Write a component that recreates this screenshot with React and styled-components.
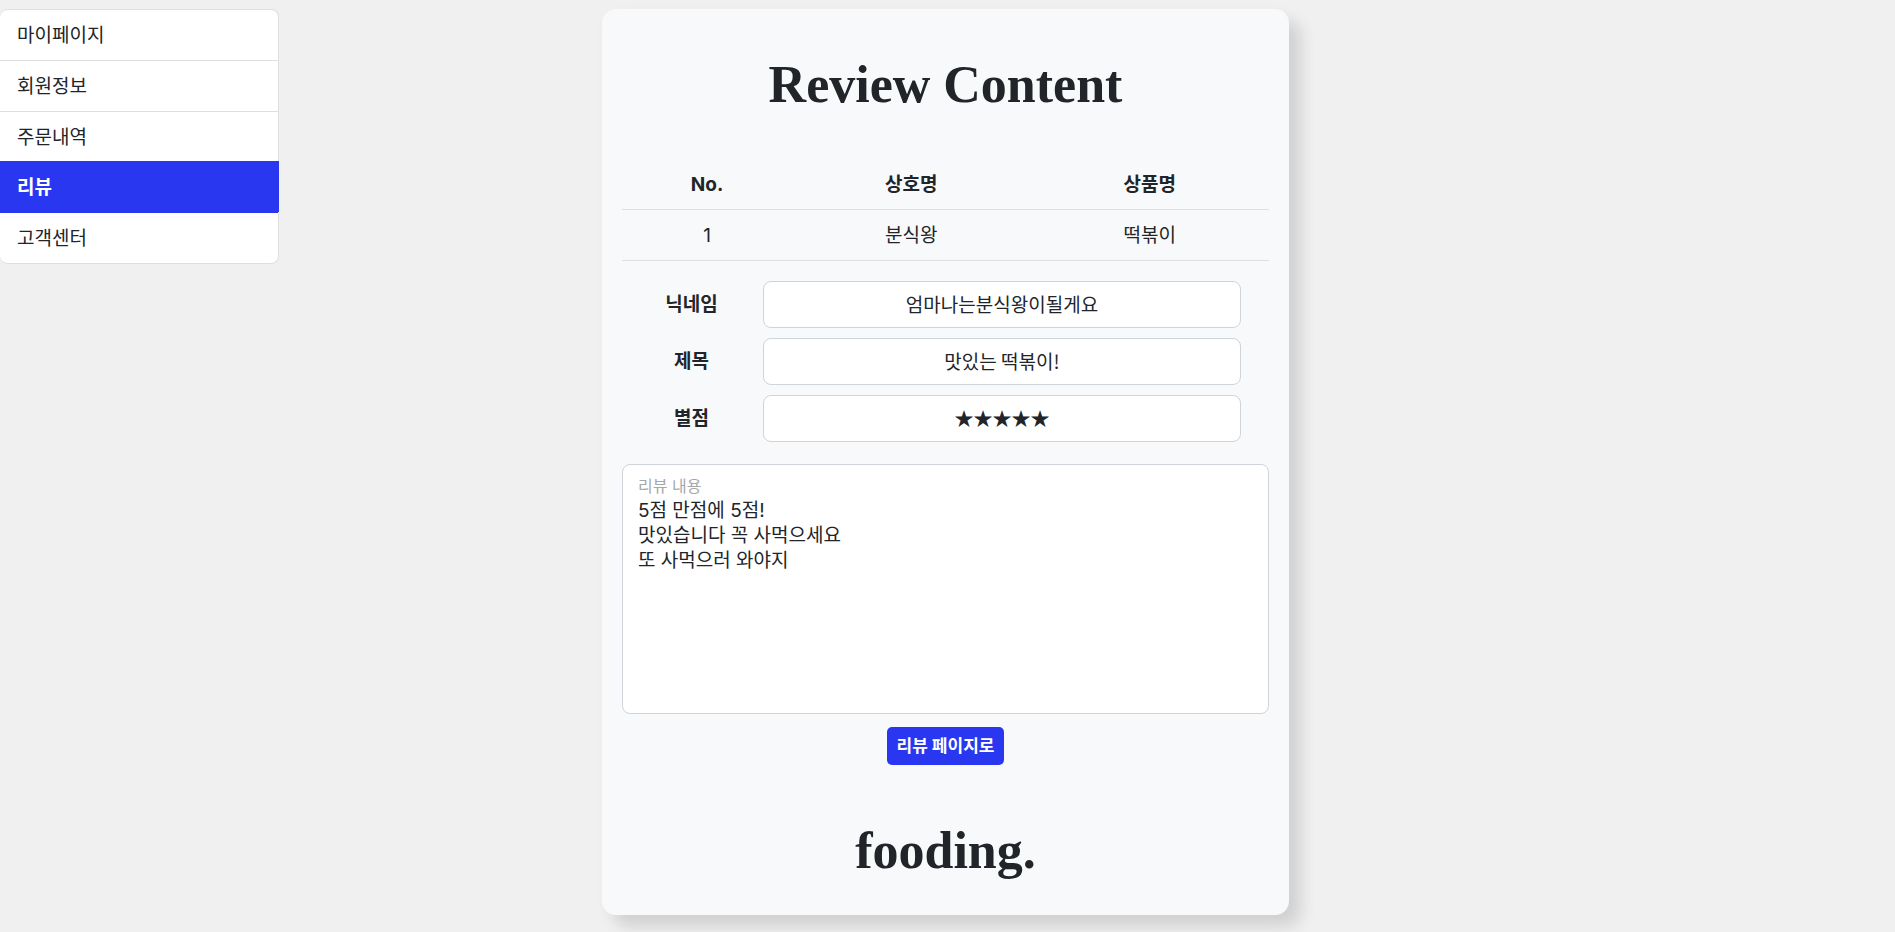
import React from "react";
import styled, { createGlobalStyle } from "styled-components";

const GlobalStyle = createGlobalStyle`
  *, *::before, *::after { box-sizing: border-box; }
  body {
    margin: 0;
    background: #f0f0f0;
    color: #212529;
    font-family: Inter, "Noto Sans CJK KR", sans-serif;
    font-size: 19px;
    line-height: 25px;
  }
`;

const Page = styled.div`
  display: grid;
  grid-template-columns: 1fr minmax(0, 687px) 1fr;
  align-items: start;
  padding: 9px 4px 17px 0;
`;

const Menu = styled.nav`
  max-width: 279px;
  background: #fff;
  border: 1px solid #dedfe0;
  border-left: 0;
  border-radius: 8px;
`;

const MenuLink = styled.a`
  display: block;
  padding: ${(p) => (p.$active ? "12px 17px" : "13px 17px 12px")};
  color: ${(p) => (p.$active ? "#fff" : "#212529")};
  background: ${(p) => (p.$active ? "#2937f0" : "transparent")};
  font-weight: ${(p) => (p.$active ? 700 : 400)};
  text-decoration: none;
  box-shadow: ${(p) => (p.$active ? "0 -1px #2937f0, 1px 0 #2937f0, 1px -1px #2937f0" : "none")};
  border-top: 1px solid ${(p) => (p.$active ? "#2937f0" : "#dedfe0")};

  &:first-child { border-top: 0; }
  &:last-child { border-top-color: #2937f0; }
`;

const Card = styled.main`
  padding: 40px 20px 28px;
  background: #f8f9fb;
  border-radius: 14px;
  box-shadow: 12px 12px 16px rgba(0, 0, 0, 0.12), 4px 4px 24px rgba(0, 0, 0, 0.02);
`;

const Heading = styled.h1`
  margin: 0;
  font-family: "Liberation Serif", serif;
  font-size: 52px;
  font-weight: 700;
  line-height: 72px;
  text-align: center;
`;

const Brand = styled(Heading).attrs({ as: "p" })`
  margin-top: 50px;
`;

const OrderTable = styled.table`
  width: 100%;
  margin: 38px 0 20px;
  border-collapse: separate;
  border-spacing: 0;
  table-layout: fixed;
  text-align: center;

  th, td {
    padding: 13px 8px 12px;
    border-bottom: 1px solid #dcdfe4;
  }
  th:first-child { width: 170px; }
`;

const Fields = styled.div`
  display: grid;
  gap: 10px;
  padding: 0 28px;
`;

const Field = styled.div`
  display: grid;
  grid-template-columns: 83px 1fr;
  gap: 30px;
  align-items: center;
`;

const FieldLabel = styled.label`
  font-weight: 700;
  text-align: center;
`;

const TextBox = styled.input`
  width: 100%;
  height: 47px;
  padding: 0 12px 2px;
  border: 1px solid #ced4da;
  border-radius: 8px;
  background: #fff;
  color: inherit;
  font: inherit;
  font-family: "Noto Sans CJK KR", sans-serif;
  text-align: center;
`;

const ReviewBox = styled.div`
  display: flex;
  flex-direction: column;
  height: 250px;
  margin-top: 22px;
  padding: 9px 15px;
  background: #fff;
  border: 1px solid #ced4da;
  border-radius: 8px;
`;

const ReviewLabel = styled.label`
  color: #a6a8a9;
  font-size: 16px;
  line-height: 24px;
`;

const ReviewText = styled.textarea`
  flex: 1;
  width: 100%;
  padding: 0;
  border: 0;
  outline: 0;
  resize: none;
  background: transparent;
  color: inherit;
  font: inherit;
`;

const BackButton = styled.button`
  display: block;
  height: 38px;
  margin: 13px auto 0;
  padding: 0 10px;
  border: 0;
  border-radius: 5px;
  background: #2937f0;
  color: #fff;
  font: inherit;
  font-size: 17px;
  font-weight: 700;
`;

const menu = ["마이페이지", "회원정보", "주문내역", "리뷰", "고객센터"];

const fields = [
  { id: "nickname", label: "닉네임", value: "엄마나는분식왕이될게요" },
  { id: "title", label: "제목", value: "맛있는 떡볶이!" },
  { id: "rating", label: "별점", value: "★★★★★" },
];

const review = "5점 만점에 5점!\n맛있습니다 꼭 사먹으세요\n또 사먹으러 와야지";

export default function App() {
  return (
    <>
      <GlobalStyle />
      <Page>
        <Menu>
          {menu.map((name) => (
            <MenuLink key={name} href="#" $active={name === "리뷰"}>
              {name}
            </MenuLink>
          ))}
        </Menu>
        <Card>
          <Heading>Review Content</Heading>
          <OrderTable>
            <thead>
              <tr>
                <th>No.</th>
                <th>상호명</th>
                <th>상품명</th>
              </tr>
            </thead>
            <tbody>
              <tr>
                <td>1</td>
                <td>분식왕</td>
                <td>떡볶이</td>
              </tr>
            </tbody>
          </OrderTable>
          <Fields>
            {fields.map((f) => (
              <Field key={f.id}>
                <FieldLabel htmlFor={f.id}>{f.label}</FieldLabel>
                <TextBox id={f.id} defaultValue={f.value} readOnly />
              </Field>
            ))}
          </Fields>
          <ReviewBox>
            <ReviewLabel htmlFor="review">리뷰 내용</ReviewLabel>
            <ReviewText id="review" defaultValue={review} readOnly />
          </ReviewBox>
          <BackButton type="button">리뷰 페이지로</BackButton>
          <Brand>fooding.</Brand>
        </Card>
      </Page>
    </>
  );
}
